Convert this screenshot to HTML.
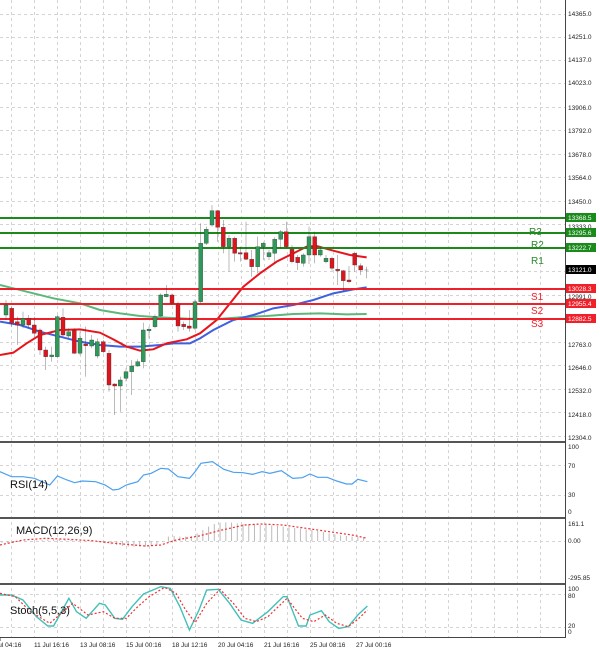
<!DOCTYPE html>
<html><head><meta charset="utf-8"><style>
html,body{margin:0;padding:0;background:#fff;width:600px;height:653px;overflow:hidden}
svg{display:block}
text{font-family:"Liberation Sans",sans-serif}
</style></head><body>
<svg width="600" height="653" viewBox="0 0 600 653" xmlns="http://www.w3.org/2000/svg">
<rect width="600" height="653" fill="#fff"/>
<!-- grid -->
<g stroke="#d4d4d4" stroke-width="1" stroke-dasharray="3,3">
<line x1="11.5" y1="0" x2="11.5" y2="637"/><line x1="34.5" y1="0" x2="34.5" y2="637"/><line x1="57.5" y1="0" x2="57.5" y2="637"/><line x1="80.5" y1="0" x2="80.5" y2="637"/><line x1="103.5" y1="0" x2="103.5" y2="637"/><line x1="126.5" y1="0" x2="126.5" y2="637"/><line x1="149.5" y1="0" x2="149.5" y2="637"/><line x1="172.5" y1="0" x2="172.5" y2="637"/><line x1="195.5" y1="0" x2="195.5" y2="637"/><line x1="218.5" y1="0" x2="218.5" y2="637"/><line x1="241.5" y1="0" x2="241.5" y2="637"/><line x1="264.5" y1="0" x2="264.5" y2="637"/><line x1="287.5" y1="0" x2="287.5" y2="637"/><line x1="310.5" y1="0" x2="310.5" y2="637"/><line x1="333.5" y1="0" x2="333.5" y2="637"/><line x1="356.5" y1="0" x2="356.5" y2="637"/><line x1="379.5" y1="0" x2="379.5" y2="637"/><line x1="402.5" y1="0" x2="402.5" y2="637"/><line x1="425.5" y1="0" x2="425.5" y2="637"/><line x1="448.5" y1="0" x2="448.5" y2="637"/><line x1="471.5" y1="0" x2="471.5" y2="637"/><line x1="494.5" y1="0" x2="494.5" y2="637"/><line x1="517.5" y1="0" x2="517.5" y2="637"/><line x1="540.5" y1="0" x2="540.5" y2="637"/>
<line x1="0" y1="14.5" x2="565" y2="14.5"/><line x1="0" y1="37.5" x2="565" y2="37.5"/><line x1="0" y1="60.5" x2="565" y2="60.5"/><line x1="0" y1="83.5" x2="565" y2="83.5"/><line x1="0" y1="107.5" x2="565" y2="107.5"/><line x1="0" y1="130.5" x2="565" y2="130.5"/><line x1="0" y1="154.5" x2="565" y2="154.5"/><line x1="0" y1="177.5" x2="565" y2="177.5"/><line x1="0" y1="201.5" x2="565" y2="201.5"/><line x1="0" y1="224.5" x2="565" y2="224.5"/><line x1="0" y1="248.5" x2="565" y2="248.5"/><line x1="0" y1="271.5" x2="565" y2="271.5"/><line x1="0" y1="295.5" x2="565" y2="295.5"/><line x1="0" y1="318.5" x2="565" y2="318.5"/><line x1="0" y1="342.5" x2="565" y2="342.5"/><line x1="0" y1="365.5" x2="565" y2="365.5"/><line x1="0" y1="389.5" x2="565" y2="389.5"/><line x1="0" y1="412.5" x2="565" y2="412.5"/><line x1="0" y1="436.5" x2="565" y2="436.5"/>
<line x1="0" y1="465.5" x2="565" y2="465.5"/><line x1="0" y1="495.5" x2="565" y2="495.5"/>
<line x1="0" y1="541.5" x2="565" y2="541.5"/>
<line x1="0" y1="594.5" x2="565" y2="594.5"/><line x1="0" y1="627.5" x2="565" y2="627.5"/>
</g>
<!-- MAs -->
<g transform="translate(0,200) scale(0.33333)" fill="none" stroke-width="2" vector-effect="non-scaling-stroke">
<polyline stroke="#5cb87a" vector-effect="non-scaling-stroke" points="0,255 40,265 100,280 160,295 240,310 300,330 360,340 420,348 480,352 560,356 640,358 720,352 800,348 880,342 960,340 1040,343 1100,342"/>
<polyline stroke="#4060e0" vector-effect="non-scaling-stroke" points="0,365 60,375 120,395 180,410 240,425 300,435 360,440 420,440 480,435 520,430 570,430 600,415 640,390 700,360 760,345 820,325 880,315 940,300 1000,280 1060,268 1100,262"/>
<polyline stroke="#e8141c" vector-effect="non-scaling-stroke" points="0,465 40,458 80,430 120,405 180,390 240,388 300,398 340,418 380,440 420,452 460,448 500,430 560,418 600,400 650,360 690,310 730,260 780,220 830,185 880,160 920,140 950,138 1000,152 1050,165 1100,172"/>
</g>
<!-- levels -->
<g stroke-width="2">
<line x1="0" y1="218" x2="565" y2="218" stroke="#1a8a1a"/>
<line x1="0" y1="233" x2="565" y2="233" stroke="#1a8a1a"/>
<line x1="0" y1="248" x2="565" y2="248" stroke="#1a8a1a"/>
<line x1="0" y1="289" x2="565" y2="289" stroke="#f0202a"/>
<line x1="0" y1="304" x2="565" y2="304" stroke="#f0202a"/>
<line x1="0" y1="319" x2="565" y2="319" stroke="#f0202a"/>
</g>
<!-- candles -->
<g transform="translate(0,200) scale(0.33333)" stroke="#333" stroke-width="1">
<g id="c">
<line x1="18" y1="300" x2="18" y2="360"/><rect x="12" y="315" width="12" height="30" fill="#2e9a5a"/>
<line x1="35" y1="320" x2="35" y2="380"/><rect x="29" y="325" width="12" height="45" fill="#e0141c"/>
<line x1="52" y1="350" x2="52" y2="435"/><rect x="46" y="365" width="12" height="10" fill="#e0141c"/>
<line x1="69" y1="335" x2="69" y2="385"/><rect x="63" y="355" width="12" height="20" fill="#2e9a5a"/>
<line x1="86" y1="345" x2="86" y2="385"/><rect x="80" y="355" width="12" height="20" fill="#e0141c"/>
<line x1="103" y1="350" x2="103" y2="410"/><rect x="97" y="375" width="12" height="25" fill="#e0141c"/>
<line x1="120" y1="385" x2="120" y2="465"/><rect x="114" y="390" width="12" height="60" fill="#e0141c"/>
<line x1="137" y1="440" x2="137" y2="510"/><rect x="131" y="450" width="12" height="20" fill="#e0141c"/>
<line x1="155" y1="440" x2="155" y2="485"/><rect x="149" y="465" width="12" height="5" fill="#2e9a5a"/>
<line x1="172" y1="345" x2="172" y2="475"/><rect x="166" y="350" width="12" height="120" fill="#2e9a5a"/>
<line x1="189" y1="325" x2="189" y2="410"/><rect x="183" y="352" width="12" height="53" fill="#e0141c"/>
<line x1="206" y1="385" x2="206" y2="415"/><rect x="200" y="395" width="12" height="13" fill="#2e9a5a"/>
<line x1="223" y1="385" x2="223" y2="462"/><rect x="217" y="390" width="12" height="70" fill="#e0141c"/>
<line x1="240" y1="395" x2="240" y2="465"/><rect x="234" y="415" width="12" height="45" fill="#2e9a5a"/>
<line x1="257" y1="380" x2="257" y2="530"/><rect x="251" y="432" width="12" height="5" fill="#e0141c"/>
<line x1="275" y1="405" x2="275" y2="445"/><rect x="269" y="420" width="12" height="18" fill="#2e9a5a"/>
<line x1="292" y1="415" x2="292" y2="475"/><rect x="286" y="425" width="12" height="43" fill="#2e9a5a"/>
<line x1="310" y1="420" x2="310" y2="460"/><rect x="304" y="425" width="12" height="30" fill="#e0141c"/>
<line x1="327" y1="450" x2="327" y2="575"/><rect x="321" y="460" width="12" height="95" fill="#e0141c"/>
<line x1="344" y1="550" x2="344" y2="645"/><rect x="338" y="552" width="12" height="6" fill="#e0141c"/>
<line x1="361" y1="530" x2="361" y2="635"/><rect x="355" y="540" width="12" height="18" fill="#2e9a5a"/>
<line x1="378" y1="505" x2="378" y2="545"/><rect x="372" y="515" width="12" height="20" fill="#2e9a5a"/>
<line x1="395" y1="480" x2="395" y2="585"/><rect x="389" y="498" width="12" height="17" fill="#2e9a5a"/>
<line x1="413" y1="478" x2="413" y2="500"/><rect x="407" y="485" width="12" height="13" fill="#2e9a5a"/>
<line x1="430" y1="368" x2="430" y2="505"/><rect x="424" y="390" width="12" height="95" fill="#2e9a5a"/>
<line x1="447" y1="380" x2="447" y2="415"/><rect x="441" y="388" width="12" height="4" fill="#2e9a5a"/>
<line x1="465" y1="343" x2="465" y2="385"/><rect x="459" y="350" width="12" height="30" fill="#2e9a5a"/>
<line x1="482" y1="280" x2="482" y2="350"/><rect x="476" y="285" width="12" height="63" fill="#2e9a5a"/>
<line x1="499" y1="255" x2="499" y2="292"/><rect x="493" y="283" width="12" height="7" fill="#2e9a5a"/>
<line x1="516" y1="280" x2="516" y2="315"/><rect x="510" y="285" width="12" height="25" fill="#e0141c"/>
<line x1="534" y1="305" x2="534" y2="395"/><rect x="528" y="312" width="12" height="66" fill="#e0141c"/>
<line x1="551" y1="365" x2="551" y2="390"/><rect x="545" y="373" width="12" height="7" fill="#e0141c"/>
<line x1="568" y1="330" x2="568" y2="395"/><rect x="562" y="378" width="12" height="7" fill="#e0141c"/>
<line x1="585" y1="298" x2="585" y2="390"/><rect x="579" y="305" width="12" height="80" fill="#2e9a5a"/>
<line x1="602" y1="70" x2="602" y2="310"/><rect x="596" y="130" width="12" height="175" fill="#2e9a5a"/>
<line x1="619" y1="80" x2="619" y2="135"/><rect x="613" y="88" width="12" height="42" fill="#2e9a5a"/>
<line x1="636" y1="15" x2="636" y2="80"/><rect x="630" y="32" width="12" height="43" fill="#2e9a5a"/>
<line x1="653" y1="30" x2="653" y2="125"/><rect x="647" y="32" width="12" height="50" fill="#e0141c"/>
<line x1="670" y1="60" x2="670" y2="160"/><rect x="664" y="82" width="12" height="58" fill="#e0141c"/>
<line x1="687" y1="105" x2="687" y2="215"/><rect x="681" y="115" width="12" height="25" fill="#2e9a5a"/>
<line x1="704" y1="110" x2="704" y2="185"/><rect x="698" y="115" width="12" height="45" fill="#e0141c"/>
<line x1="721" y1="140" x2="721" y2="185"/><rect x="715" y="158" width="12" height="4" fill="#e0141c"/>
<line x1="738" y1="65" x2="738" y2="180"/><rect x="732" y="158" width="12" height="20" fill="#e0141c"/>
<line x1="755" y1="150" x2="755" y2="230"/><rect x="749" y="178" width="12" height="22" fill="#e0141c"/>
<line x1="773" y1="110" x2="773" y2="220"/><rect x="767" y="140" width="12" height="60" fill="#2e9a5a"/>
<line x1="790" y1="125" x2="790" y2="180"/><rect x="784" y="130" width="12" height="10" fill="#2e9a5a"/>
<line x1="807" y1="150" x2="807" y2="180"/><rect x="801" y="158" width="12" height="12" fill="#2e9a5a"/>
<line x1="824" y1="112" x2="824" y2="190"/><rect x="818" y="118" width="12" height="42" fill="#2e9a5a"/>
<line x1="842" y1="90" x2="842" y2="145"/><rect x="836" y="95" width="12" height="23" fill="#2e9a5a"/>
<line x1="859" y1="65" x2="859" y2="145"/><rect x="853" y="95" width="12" height="45" fill="#e0141c"/>
<line x1="876" y1="135" x2="876" y2="190"/><rect x="870" y="148" width="12" height="37" fill="#e0141c"/>
<line x1="893" y1="165" x2="893" y2="210"/><rect x="887" y="172" width="12" height="16" fill="#e0141c"/>
<line x1="910" y1="160" x2="910" y2="200"/><rect x="904" y="165" width="12" height="25" fill="#2e9a5a"/>
<line x1="927" y1="80" x2="927" y2="192"/><rect x="921" y="110" width="12" height="55" fill="#2e9a5a"/>
<line x1="944" y1="95" x2="944" y2="190"/><rect x="938" y="110" width="12" height="55" fill="#e0141c"/>
<line x1="961" y1="140" x2="961" y2="170"/><rect x="955" y="150" width="12" height="15" fill="#2e9a5a"/>
<line x1="978" y1="165" x2="978" y2="190"/><rect x="972" y="175" width="12" height="10" fill="#2e9a5a"/>
<line x1="996" y1="170" x2="996" y2="212"/><rect x="990" y="175" width="12" height="30" fill="#e0141c"/>
<line x1="1013" y1="165" x2="1013" y2="255"/><rect x="1007" y="208" width="12" height="4" fill="#e0141c"/>
<line x1="1030" y1="210" x2="1030" y2="275"/><rect x="1024" y="212" width="12" height="30" fill="#e0141c"/>
<line x1="1047" y1="198" x2="1047" y2="250"/><rect x="1041" y="240" width="12" height="5" fill="#e0141c"/>
<line x1="1064" y1="155" x2="1064" y2="215"/><rect x="1058" y="160" width="12" height="35" fill="#e0141c"/>
<line x1="1082" y1="190" x2="1082" y2="225"/><rect x="1076" y="197" width="12" height="13" fill="#e0141c"/>
<line x1="1099" y1="200" x2="1099" y2="235"/><line x1="1093" y1="210" x2="1105" y2="210"/>
</g>
</g>
<!-- left edge candles in 0-200 region upper-left continuation -->
<!-- level labels -->
<g font-size="10">
<text x="529" y="235" fill="#2a8a2a">R3</text>
<text x="531" y="248" fill="#2a8a2a">R2</text>
<text x="531" y="264" fill="#2a8a2a">R1</text>
<text x="531" y="300" fill="#f0202a">S1</text>
<text x="531" y="314" fill="#f0202a">S2</text>
<text x="531" y="327" fill="#f0202a">S3</text>
</g>
<!-- panel separators -->
<g stroke="#555" stroke-width="2">
<line x1="0" y1="442" x2="565" y2="442"/>
<line x1="0" y1="518" x2="565" y2="518"/>
<line x1="0" y1="584" x2="565" y2="584"/>
</g>
<line x1="0" y1="637.5" x2="566" y2="637.5" stroke="#444"/>
<line x1="565.5" y1="0" x2="565.5" y2="638" stroke="#444"/>
<!-- RSI -->
<g transform="translate(0,430) scale(0.3827,0.33333)" fill="none">
<polyline stroke="#4aa0f0" stroke-width="1.2" vector-effect="non-scaling-stroke" points="0,125 30,140 60,140 90,145 130,165 150,138 175,150 195,158 215,153 250,155 275,165 295,180 310,178 330,165 360,155 375,135 395,130 420,115 440,117 465,140 495,145 510,125 525,100 555,95 585,118 610,127 635,128 660,133 685,125 705,130 735,122 765,145 790,143 810,132 830,142 855,142 880,153 905,162 920,162 935,148 960,155"/>
<!-- MACD histogram -->
<g stroke="#bbb" stroke-width="1" vector-effect="non-scaling-stroke">
<path vector-effect="non-scaling-stroke" d="M5 333V338M20 333V340M35 333V338M50 333V336M65 333V335M80 333V335M95 333V332M110 333V330M125 333V328M140 333V327M155 333V327M170 333V328M185 333V330M200 333V331M215 333V332M230 333V333M245 333V334M260 333V336M275 333V340M290 333V343M305 333V345M320 333V348M335 333V350M350 333V350M365 333V350M380 333V350M395 333V348M410 333V345M425 333V335M440 333V320M455 333V318M470 333V320M485 333V320M500 333V318M515 333V310M530 333V300M545 333V290M560 333V282M575 333V278M590 333V277M605 333V278M620 333V280M635 333V282M650 333V283M665 333V283M680 333V285M695 333V285M710 333V286M725 333V288M740 333V290M755 333V292M770 333V294M785 333V296M800 333V298M815 333V300M830 333V303M845 333V306M860 333V310M875 333V313M890 333V316M905 333V318M920 333V320M935 333V320M950 333V322"/>
</g>
<polyline stroke="#f03030" stroke-width="1.2" stroke-dasharray="2,2" vector-effect="non-scaling-stroke" points="0,345 60,330 120,325 180,328 240,332 300,340 380,348 420,345 460,330 520,318 580,300 640,285 680,282 740,285 800,295 860,305 920,315 960,325"/>
<!-- Stoch -->
<polyline stroke="#40c0b8" stroke-width="1.4" vector-effect="non-scaling-stroke" points="0,495 30,495 60,510 95,560 125,588 140,588 180,505 200,545 225,565 260,520 275,525 300,565 320,568 345,530 375,492 420,470 445,475 470,530 495,600 520,540 540,480 570,478 600,520 630,570 660,580 700,545 740,500 750,500 780,588 800,588 810,555 840,542 860,575 885,595 910,590 935,555 960,528"/>
<polyline stroke="#f03030" stroke-width="1.2" stroke-dasharray="2,2" vector-effect="non-scaling-stroke" points="0,490 40,500 80,545 130,580 160,550 190,520 230,555 270,545 300,565 330,565 360,530 390,500 430,472 460,490 485,540 510,578 540,520 575,478 610,520 640,565 670,575 700,560 750,505 790,565 820,575 850,555 880,580 910,590 935,568 960,540"/>
</g>
<!-- panel labels -->
<g font-size="11" fill="#111">
<text x="10" y="488">RSI(14)</text>
<text x="16" y="534">MACD(12,26,9)</text>
<text x="10" y="614">Stoch(5,5,3)</text>
</g>
<!-- right axis labels -->
<g font-size="6.5" fill="#222">
<text x="568" y="16">14365.0</text><text x="568" y="39">14251.0</text><text x="568" y="62">14137.0</text><text x="568" y="85">14023.0</text><text x="568" y="110">13906.0</text><text x="568" y="133">13792.0</text><text x="568" y="157">13678.0</text><text x="568" y="180">13564.0</text><text x="568" y="204">13450.0</text><text x="568" y="229">13333.0</text><text x="568" y="299">12991.0</text><text x="568" y="347">12763.0</text><text x="568" y="370">12646.0</text><text x="568" y="393">12532.0</text><text x="568" y="417">12418.0</text><text x="568" y="440">12304.0</text>
<text x="568" y="449">100</text><text x="568" y="468">70</text><text x="568" y="497">30</text><text x="568" y="514">0</text>
<text x="568" y="526">161.1</text><text x="568" y="543">0.00</text><text x="568" y="580">-295.85</text>
<text x="568" y="591">100</text><text x="568" y="598">80</text><text x="568" y="628">20</text><text x="568" y="634">0</text>
</g>
<g font-size="6.5">
<rect x="566" y="213" width="30" height="9" fill="#1a8a1a"/><text x="568" y="220" fill="#fff">13368.5</text>
<rect x="566" y="228" width="30" height="9" fill="#1a8a1a"/><text x="568" y="235" fill="#fff">13295.6</text>
<rect x="566" y="243" width="30" height="9" fill="#1a8a1a"/><text x="568" y="250" fill="#fff">13222.7</text>
<rect x="566" y="265" width="30" height="9" fill="#000"/><text x="568" y="272" fill="#fff">13121.0</text>
<rect x="566" y="284" width="30" height="9" fill="#f0202a"/><text x="568" y="291" fill="#fff">13028.3</text>
<rect x="566" y="299" width="30" height="9" fill="#f0202a"/><text x="568" y="306" fill="#fff">12955.4</text>
<rect x="566" y="314" width="30" height="9" fill="#f0202a"/><text x="568" y="321" fill="#fff">12882.5</text>
</g>
<!-- dates -->
<g font-size="6.5" fill="#222">
<line x1="0" y1="638" x2="0" y2="641" stroke="#444"/>
<text x="-14" y="647">10 Jul 04:16</text>
<text x="34" y="647">11 Jul 16:16</text>
<text x="80" y="647">13 Jul 08:16</text>
<text x="126" y="647">15 Jul 00:16</text>
<text x="172" y="647">18 Jul 12:16</text>
<text x="218" y="647">20 Jul 04:16</text>
<text x="264" y="647">21 Jul 16:16</text>
<text x="310" y="647">25 Jul 08:16</text>
<text x="356" y="647">27 Jul 00:16</text>
</g>
</svg>
</body></html>
